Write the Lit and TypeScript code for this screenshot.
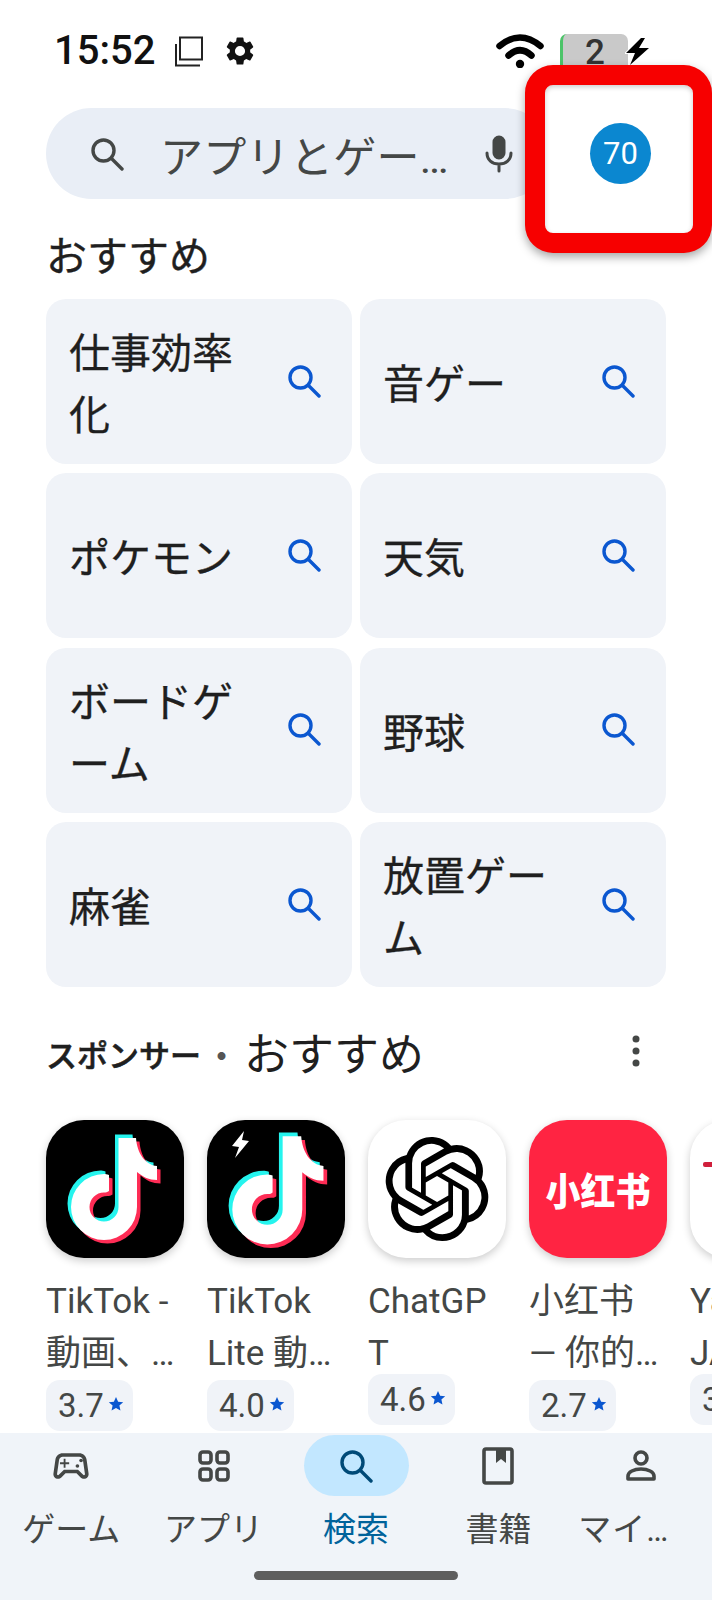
import { LitElement, css, html, svg } from "lit";
import { customElement } from "lit/decorators.js";

const searchIcon = html`<svg viewBox="0 0 34 34" fill="none" stroke="currentColor" stroke-width="3.4" stroke-linecap="round">
  <circle cx="13.5" cy="13.5" r="10.5"></circle><path d="M21.5 21.5 32 32"></path>
</svg>`;

// the music note, drawn three times with an offset for the glitch look
const NOTE = "M72.5 18H90C91 33 99 45 111 46V60C103 60 97 57 91 52V87A33 33 0 1 1 58 54C59 54 61 54 63 55V71C61 72.500 60 72.500 58 72.500A14.500 14.500 0 1 0 72.500 87Z";

const note = () => svg`
  <path d=${NOTE} fill="#25f4ee" transform="translate(-3.5 -3.5)"></path>
  <path d=${NOTE} fill="#fe2c55" transform="translate(3.5 3.5)"></path>
  <path d=${NOTE} fill="#fff"></path>`;

const tiktok = html`<svg class="logo" viewBox="0 0 138 138">${note()}</svg>`;

const tiktokLite = html`<svg class="logo" viewBox="0 0 138 138">
  <g transform="translate(-1.2 -2.8) scale(1.06)">${note()}</g>
  <path d="M37 11 25 26l7 1-4 11 14-17-7-1 2-9Z" fill="#fff"></path>
</svg>`;

const chatgpt = html`<svg class="knot" viewBox="0 0 24 24" fill="#000">
  <path d="M22.2819 9.8211a5.9847 5.9847 0 0 0-.5157-4.9108 6.0462 6.0462 0 0 0-6.5098-2.9A6.0651 6.0651 0 0 0 4.9807 4.1818a5.9847 5.9847 0 0 0-3.9977 2.9 6.0462 6.0462 0 0 0 .7427 7.0966 5.98 5.98 0 0 0 .511 4.9107 6.051 6.051 0 0 0 6.5146 2.9001A5.9847 5.9847 0 0 0 13.2599 24a6.0557 6.0557 0 0 0 5.7718-4.2058 5.9894 5.9894 0 0 0 3.9977-2.9001 6.0557 6.0557 0 0 0-.7475-7.0729zm-9.022 12.6081a4.4755 4.4755 0 0 1-2.8764-1.0408l.1419-.0804 4.7783-2.7582a.7948.7948 0 0 0 .3927-.6813v-6.7369l2.02 1.1686a.071.071 0 0 1 .038.052v5.5826a4.504 4.504 0 0 1-4.4945 4.4944zm-9.6607-4.1254a4.4708 4.4708 0 0 1-.5346-3.0137l.142.0852 4.783 2.7582a.7712.7712 0 0 0 .7806 0l5.8428-3.3685v2.3324a.0804.0804 0 0 1-.0332.0615L9.74 19.9502a4.4992 4.4992 0 0 1-6.1408-1.6464zM2.3408 7.8956a4.485 4.485 0 0 1 2.3655-1.9728V11.6a.7664.7664 0 0 0 .3879.6765l5.8144 3.3543-2.0201 1.1685a.0757.0757 0 0 1-.071 0l-4.8303-2.7865A4.504 4.504 0 0 1 2.3408 7.872zm16.5963 3.8558L13.1038 8.364 15.1192 7.2a.0757.0757 0 0 1 .071 0l4.8303 2.7913a4.4944 4.4944 0 0 1-.6765 8.1042v-5.6772a.79.79 0 0 0-.407-.667zm2.0107-3.0231l-.142-.0852-4.7735-2.7818a.7759.7759 0 0 0-.7854 0L9.409 9.2297V6.8974a.0662.0662 0 0 1 .0284-.0615l4.8303-2.7866a4.4992 4.4992 0 0 1 6.6802 4.66zM8.3065 12.863l-2.02-1.1638a.0804.0804 0 0 1-.038-.0567V6.0742a4.4992 4.4992 0 0 1 7.3757-3.4537l-.142.0805L8.704 5.459a.7948.7948 0 0 0-.3927.6813zm1.0976-2.3654l2.602-1.4998 2.6069 1.4998v2.9994l-2.5974 1.4997-2.6067-1.4997Z"></path>
</svg>`;

interface App {
  lines: string[];
  rating: string;
  tile: string;
  logo: unknown;
  latin?: boolean;
}

const suggestions = ["仕事効率化", "音ゲー", "ポケモン", "天気", "ボードゲーム", "野球", "麻雀", "放置ゲーム"];

const apps: App[] = [
  { lines: ["TikTok -", "動画、…"], rating: "3.7", tile: "black", logo: tiktok },
  { lines: ["TikTok", "Lite 動…"], rating: "4.0", tile: "black", logo: tiktokLite },
  { lines: ["ChatGP", "T"], rating: "4.6", tile: "white", logo: chatgpt, latin: true },
  { lines: ["小红书", "— 你的…"], rating: "2.7", tile: "red", logo: html`<span class="xhs">小红书</span>` },
  { lines: ["Yahoo!", "JAPAN"], rating: "3.9", tile: "white", logo: html`<span class="yj"></span>`, latin: true },
];

const tabs = [
  {
    label: "ゲーム",
    icon: html`<svg class="tab-icon" viewBox="0 0 24 24" fill="currentColor">
      <path d="M21.58 16.09l-1.09-7.66C20.21 6.46 18.52 5 16.53 5H7.47C5.48 5 3.79 6.46 3.51 8.43l-1.09 7.66C2.2 17.63 3.39 19 4.94 19c.68 0 1.32-.27 1.8-.75L9 16h6l2.25 2.25c.48.48 1.13.75 1.8.75 1.56 0 2.75-1.37 2.53-2.91zm-2.1.72c-.08.09-.21.19-.42.19-.15 0-.29-.06-.39-.16L15.83 14H8.17l-2.84 2.84c-.1.1-.24.16-.39.16-.21 0-.34-.1-.42-.19-.08-.09-.16-.23-.13-.44l1.09-7.66C5.63 7.74 6.48 7 7.47 7h9.06c.99 0 1.84.74 1.98 1.72l1.09 7.66c.03.2-.05.34-.12.43z"></path>
      <path d="M9 8H8v2H6v1h2v2h1v-2h2v-1H9V8z"></path>
      <circle cx="15.5" cy="12" r="1"></circle><circle cx="17.5" cy="9" r="1"></circle>
    </svg>`,
  },
  {
    label: "アプリ",
    icon: html`<svg class="tab-icon" viewBox="0 0 44 44" fill="none" stroke="currentColor" stroke-width="3.6">
      <rect x="8" y="8" width="11" height="11" rx="3"></rect><rect x="25" y="8" width="11" height="11" rx="3"></rect>
      <rect x="8" y="25" width="11" height="11" rx="3"></rect><rect x="25" y="25" width="11" height="11" rx="3"></rect>
    </svg>`,
  },
  {
    label: "検索",
    active: true,
    icon: html`<svg class="tab-icon search" viewBox="0 0 34 34" fill="none" stroke="currentColor" stroke-width="3.4" stroke-linecap="round">
      <circle cx="13.5" cy="13.5" r="10.5"></circle><path d="M21.5 21.5 32 32"></path>
    </svg>`,
  },
  {
    label: "書籍",
    icon: html`<svg class="tab-icon" viewBox="0 0 44 44">
      <rect x="8" y="5" width="28" height="34" rx="2" fill="none" stroke="currentColor" stroke-width="3.6"></rect>
      <path d="M20 5h10v14l-5-4-5 4Z" fill="currentColor"></path>
    </svg>`,
  },
  {
    label: "マイ…",
    truncated: true,
    icon: html`<svg class="tab-icon" viewBox="0 0 44 44" fill="none" stroke="currentColor" stroke-width="3.6">
      <circle cx="22" cy="14" r="6"></circle>
      <path d="M9 35v-3c0-4 6-7 13-7s13 3 13 7v3Z" stroke-linejoin="round"></path>
    </svg>`,
  },
];

@customElement("app-root")
export class AppRoot extends LitElement {
  static styles = css`
    :host {
      display: block;
      position: relative;
      width: 712px;
      height: 1600px;
      overflow: hidden;
      background: #fff;
      color: #1f1f1f;
      font-family: Roboto, "Noto Sans CJK JP", sans-serif;
    }

    .content {
      height: 1433px;
      overflow: hidden;
      box-sizing: border-box;
    }

    /* status bar */
    .status {
      display: flex;
      align-items: center;
      height: 34px;
      padding: 34px 62px 0 54px;
    }
    .time {
      font-size: 40px;
      font-weight: 500;
      color: #111;
      width: 120px;
      line-height: 34px;
    }
    .copy {
      width: 30px;
      height: 31px;
      margin-right: 19px;
    }
    .gear {
      width: 34px;
      height: 34px;
    }
    .status-right {
      margin-left: auto;
      display: flex;
      align-items: center;
    }
    .wifi {
      width: 48px;
      height: 34px;
      margin-right: 16px;
    }
    .battery {
      width: 68px;
      height: 38px;
      box-sizing: border-box;
      margin-top: 4px;
      border-left: 3px solid #4cc469;
      border-radius: 7px;
      background: #c9c9c9;
      color: #333;
      font-size: 35px;
      font-weight: 500;
      line-height: 38px;
      text-align: center;
      padding-right: 1px;
    }
    .bolt {
      flex: none;
      width: 25px;
      height: 27px;
      margin-left: -3px;
    }

    /* search field */
    .search-bar {
      display: flex;
      align-items: center;
      width: 504px;
      height: 91px;
      box-sizing: border-box;
      margin: 40px 0 0 46px;
      padding-left: 44px;
      border-radius: 46px;
      background: #e9eef6;
      color: #444746;
    }
    .search-bar > svg:first-child {
      width: 34px;
      height: 34px;
      margin-right: 36px;
    }
    .placeholder {
      font-size: 43px;
      white-space: nowrap;
      width: 293px;
      margin-right: 31px;
      letter-spacing: 0.3px;
    }
    .mic {
      width: 30px;
      height: 38px;
    }

    .heading {
      margin: 34px 0 0 46px;
      font-size: 41px;
      font-weight: 400;
      -webkit-text-stroke: 0.4px #1f1f1f;
      line-height: 48px;
    }

    /* suggestion grid */
    .grid {
      display: grid;
      grid-template-columns: 306px 306px;
      grid-auto-rows: 165px;
      column-gap: 8px;
      row-gap: 9.4px;
      margin: 18px 0 0 46px;
    }
    .card {
      display: flex;
      align-items: center;
      padding-left: 24px;
      border-radius: 20px;
      background: #f0f3f8;
    }
    .card-text {
      width: 195px;
      margin-right: 23px;
      margin-left: -1px;
      padding-top: 7px;
      font-size: 41px;
      line-height: 62px;
      line-break: loose;
      -webkit-text-stroke: 0.3px #1f1f1f;
    }
    .card svg {
      width: 34px;
      height: 34px;
      margin-top: -2px;
      color: #0b57d0;
    }

    /* sponsored row */
    .row-head {
      display: flex;
      align-items: center;
      height: 60px;
      margin: 36px 0 0 46px;
      padding-right: 70px;
    }
    .sponsor {
      font-size: 31px;
      font-weight: 500;
      -webkit-text-stroke: 0.6px #1f1f1f;
      white-space: nowrap;
    }
    .sep {
      margin: 0 7px 0 5px;
      color: #555;
      font-size: 31px;
      font-weight: 700;
    }
    .row-title {
      font-size: 45px;
      white-space: nowrap;
      margin-top: -3px;
    }
    .more {
      margin: -4px 0 0 auto;
      width: 12px;
      height: 36px;
    }
    .apps {
      display: flex;
      gap: 23px;
      margin: 37px 0 0 46px;
      width: 760px;
    }
    .app {
      width: 138px;
      flex: none;
    }
    .tile {
      display: flex;
      align-items: center;
      justify-content: center;
      position: relative;
      width: 138px;
      height: 138px;
      border-radius: 38px;
      box-shadow: 0 3px 8px rgba(0, 0, 0, 0.2);
    }
    .tile.black {
      background: #000;
    }
    .tile.white {
      background: #fff;
    }
    .tile.red {
      background: #ff2442;
    }
    .logo {
      width: 138px;
      height: 138px;
    }
    .knot {
      width: 104px;
      height: 104px;
    }
    .xhs {
      color: #fff;
      font-family: "Noto Sans CJK SC", sans-serif;
      font-size: 38px;
      font-weight: 900;
      line-height: 1;
      transform: scaleX(0.92);
      white-space: nowrap;
    }
    .yj {
      position: absolute;
      left: 13px;
      top: 42px;
      width: 40px;
      height: 5px;
      border-radius: 2px;
      background: #d01f3c;
    }
    .title {
      margin-top: 18px;
      color: #444746;
      font-size: 35px;
      line-height: 52px;
    }
    .title div {
      white-space: nowrap;
    }
    .chip {
      display: inline-flex;
      align-items: center;
      height: 51px;
      padding: 0 9px 0 12px;
      border-radius: 14px;
      background: #f0f3f8;
      color: #444746;
      font-size: 33px;
    }
    .chip.tight {
      margin-top: -6px;
    }
    .star {
      width: 16px;
      height: 16px;
      margin: -4px 0 0 4px;
      color: #0b57d0;
    }

    /* bottom navigation */
    .nav {
      display: flex;
      flex-wrap: wrap;
      height: 167px;
      background: #f0f4f9;
      color: #444746;
    }
    .tab {
      flex: 1 0 20%;
      display: flex;
      flex-direction: column;
      align-items: center;
      padding-top: 2px;
    }
    .pill {
      display: flex;
      align-items: center;
      justify-content: center;
      width: 105px;
      height: 61px;
      border-radius: 31px;
    }
    .tab.active {
      color: #00639b;
    }
    .tab.active .pill {
      background: #c2e7ff;
      color: #004a77;
    }
    .tab-icon {
      width: 44px;
      height: 44px;
    }
    .tab-icon.search {
      width: 34px;
      height: 34px;
    }
    .label {
      margin-top: 12px;
      font-size: 33px;
      line-height: 44px;
      white-space: nowrap;
    }
    .label.truncated {
      margin-right: 34px;
      letter-spacing: 1px;
    }
    .home-bar {
      width: 204px;
      height: 9px;
      margin: -1px auto 0;
      border-radius: 5px;
      background: #5e5e5e;
    }

    /* red call-out drawn on top of the account button */
    .callout {
      position: absolute;
      left: 525px;
      top: 65px;
      display: flex;
      align-items: center;
      justify-content: center;
      width: 187px;
      height: 188px;
      box-sizing: border-box;
      padding: 0 0 12px 3px;
      border: 20px solid #f70000;
      border-right-width: 19px;
      border-radius: 28px;
      background: #fff;
      box-shadow: 0 4px 10px rgba(0, 0, 0, 0.35), inset 0 2px 5px rgba(0, 0, 0, 0.2);
    }
    .avatar {
      display: flex;
      align-items: center;
      justify-content: center;
      width: 61px;
      height: 61px;
      border-radius: 50%;
      background: #0b87d0;
      color: #fff;
      font-size: 31px;
    }
  `;

  private renderStatus() {
    return html`
      <div class="status">
        <span class="time">15:52</span>
        <svg class="copy" viewBox="0 0 30 31" fill="none" stroke="#222" stroke-width="2">
          <rect x="6" y="1.5" width="22" height="22"></rect>
          <path d="M2 8v21.5h24"></path>
        </svg>
        <svg class="gear" viewBox="0 0 24 24" fill="#111">
          <path d="M19.14 12.94c.04-.3.06-.61.06-.94 0-.32-.02-.64-.07-.94l2.03-1.58a.49.49 0 0 0 .12-.61l-1.92-3.32a.49.49 0 0 0-.59-.22l-2.39.96c-.5-.38-1.03-.7-1.62-.94l-.36-2.54a.48.48 0 0 0-.48-.41h-3.84c-.24 0-.43.17-.47.41l-.36 2.54c-.59.24-1.13.57-1.62.94l-2.39-.96a.49.49 0 0 0-.59.22L2.74 8.87c-.12.21-.08.47.12.61l2.03 1.58c-.05.3-.09.63-.09.94s.02.64.07.94l-2.03 1.58a.49.49 0 0 0-.12.61l1.92 3.32c.12.22.37.29.59.22l2.39-.96c.5.38 1.03.7 1.62.94l.36 2.54c.05.24.24.41.48.41h3.84c.24 0 .44-.17.47-.41l.36-2.54c.59-.24 1.13-.56 1.62-.94l2.39.96c.22.08.47 0 .59-.22l1.92-3.32c.12-.22.07-.47-.12-.61l-2.01-1.58zM12 15.6A3.6 3.6 0 1 1 12 8.4a3.6 3.6 0 0 1 0 7.2z"></path>
        </svg>
        <div class="status-right">
          <svg class="wifi" viewBox="0 0 48 34" fill="none" stroke="#000" stroke-width="6.500" stroke-linecap="round">
            <path d="M3.500 12Q24-5 44.500 12"></path>
            <path d="M12.500 21.500Q24 11 35.500 21.500"></path>
            <circle cx="24" cy="30" r="4.200" fill="#000" stroke="none"></circle>
          </svg>
          <div class="battery">2</div>
          <svg class="bolt" viewBox="0 0 25 27">
            <path d="M16 0 1 15h9L5 27 24 10H14l6-10Z" fill="#000" stroke="#fff" stroke-width="2" paint-order="stroke"></path>
          </svg>
        </div>
      </div>`;
  }

  private renderApp(app: App) {
    return html`
      <div class="app">
        <div class="tile ${app.tile}">${app.logo}</div>
        <div class="title">${app.lines.map((l) => html`<div>${l}</div>`)}</div>
        <div class="chip ${app.latin ? "tight" : ""}">
          ${app.rating}
          <svg class="star" viewBox="0 0 24 24" fill="currentColor">
            <path d="M12 1.500l3.200 7 7.600.800-5.700 5.100 1.600 7.500L12 18.100l-6.700 3.800 1.600-7.500L1.200 9.300l7.600-.800Z"></path>
          </svg>
        </div>
      </div>`;
  }

  render() {
    return html`
      <div class="content">
        ${this.renderStatus()}
        <div class="search-bar">
          ${searchIcon}
          <span class="placeholder">アプリとゲー…</span>
          <svg class="mic" viewBox="0 0 30 38" fill="none" stroke="currentColor" stroke-width="3" stroke-linecap="round">
            <rect x="10" y="2" width="10" height="21" rx="5" fill="currentColor"></rect>
            <path d="M3 18c0 7 5 11 12 11s12-4 12-11M15 29v7"></path>
          </svg>
        </div>
        <h2 class="heading">おすすめ</h2>
        <div class="grid">
          ${suggestions.map(
            (s) => html`<div class="card"><div class="card-text">${s}</div>${searchIcon}</div>`
          )}
        </div>
        <div class="row-head">
          <span class="sponsor">スポンサー</span><span class="sep">・</span>
          <span class="row-title">おすすめ</span>
          <svg class="more" viewBox="0 0 12 36" fill="#444746">
            <circle cx="6" cy="6" r="3.500"></circle><circle cx="6" cy="18" r="3.500"></circle><circle cx="6" cy="30" r="3.500"></circle>
          </svg>
        </div>
        <div class="apps">${apps.map((a) => this.renderApp(a))}</div>
      </div>
      <nav class="nav">
        ${tabs.map(
          (t) => html`
            <div class="tab ${t.active ? "active" : ""}">
              <div class="pill">${t.icon}</div>
              <div class="label ${t.truncated ? "truncated" : ""}">${t.label}</div>
            </div>`
        )}
        <div class="home-bar"></div>
      </nav>
      <div class="callout"><div class="avatar">70</div></div>
    `;
  }
}
